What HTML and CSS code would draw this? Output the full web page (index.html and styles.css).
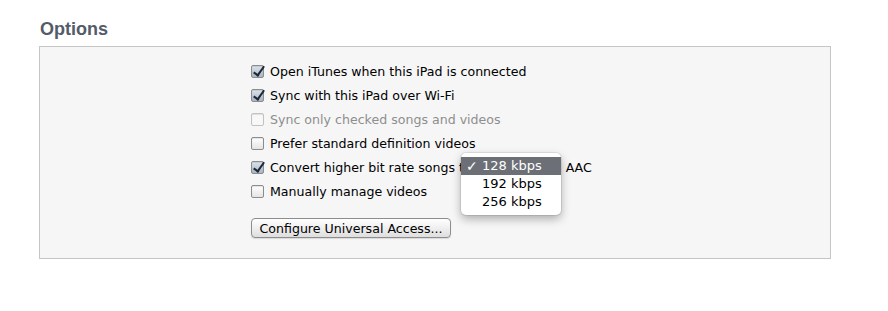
FILE: index.html
```html
<!DOCTYPE html>
<html lang="en">
<head>
  <meta charset="UTF-8" />
  <title>Options</title>
  <link rel="stylesheet" href="styles.css">
</head>
<body>
  <h1 class="title">Options</h1>

  <div class="panel">
    <div class="options">
      <div class="row">
        <span class="box checked"></span>
        <span class="label">Open iTunes when this iPad is connected</span>
      </div>
      <div class="row">
        <span class="box checked"></span>
        <span class="label">Sync with this iPad over Wi-Fi</span>
      </div>
      <div class="row disabled">
        <span class="box"></span>
        <span class="label">Sync only checked songs and videos</span>
      </div>
      <div class="row">
        <span class="box"></span>
        <span class="label">Prefer standard definition videos</span>
      </div>
      <div class="row convert">
        <span class="box checked"></span>
        <span class="label">Convert higher bit rate songs to</span>
        <span class="label aac">AAC</span>
        <ul class="menu">
          <li class="selected"><span class="tick">&#10003;</span>128 kbps</li>
          <li>192 kbps</li>
          <li>256 kbps</li>
        </ul>
      </div>
      <div class="row">
        <span class="box"></span>
        <span class="label">Manually manage videos</span>
      </div>

      <button class="button">Configure Universal Access...</button>
    </div>
  </div>
</body>
</html>
```

FILE: styles.css
```css
body {
  margin: 0;
  background: #ffffff;
  font-family: 'DejaVu Sans', 'Liberation Sans', sans-serif;
  color: #000000;
}

.title {
  margin: 0;
  padding: 18px 0 0 40px;
  font-family: 'Liberation Sans', Arial, sans-serif;
  font-size: 18px;
  font-weight: bold;
  line-height: 22px;
  color: #535b69;
}

.panel {
  margin: 6px 0 0 39px;
  width: 790px;
  height: 211px;
  background: #f6f6f6;
  border: 1px solid #c5c5c5;
}

.options {
  padding: 12px 0 0 211px;
  display: flex;
  flex-direction: column;
  align-items: flex-start;
}

.row {
  position: relative;
  display: flex;
  align-items: center;
  height: 24px;
  font-size: 12.6px;
}

.box {
  position: relative;
  width: 11px;
  height: 11px;
  margin-right: 6px;
  border: 1px solid #8c8c8c;
  border-radius: 2px;
  background: linear-gradient(#ffffff, #e4e4e4);
  box-shadow: inset 0 1px 1px rgba(0, 0, 0, 0.1);
}

.box.checked {
  background: linear-gradient(#dde4ec, #a7b5c4);
}

.box.checked::after {
  content: "";
  position: absolute;
  left: 4px;
  top: -2px;
  width: 4px;
  height: 10px;
  border: solid #1c2634;
  border-width: 0 2px 2px 0;
  transform: rotate(35deg);
}

.disabled .box {
  border-color: #c2c2c2;
  background: #f8f8f8;
}

.disabled .label {
  color: #8e8e8e;
}

.aac {
  margin-left: 94px;
}

.menu {
  position: absolute;
  left: 210px;
  top: -2px;
  width: 100px;
  margin: 0;
  padding: 4px 0 4px;
  list-style: none;
  background: #ffffff;
  border-radius: 5px;
  box-shadow: 0 4px 10px rgba(0, 0, 0, 0.3), 0 0 0 1px rgba(0, 0, 0, 0.08);
}

.menu li {
  height: 18px;
  line-height: 18px;
  padding-left: 21px;
  font-size: 13px;
}

.menu .selected {
  position: relative;
  background: #6c6f76;
  color: #ffffff;
}

.tick {
  position: absolute;
  left: 5px;
  top: 0;
  font-size: 14px;
  font-weight: bold;
}

.button {
  margin-top: 15px;
  width: 200px;
  height: 20px;
  padding: 0;
  font-family: 'DejaVu Sans', 'Liberation Sans', sans-serif;
  font-size: 12.6px;
  color: #000000;
  background: linear-gradient(#ffffff, #ececec 60%, #dedede);
  border: 1px solid #8d8d8d;
  border-radius: 4px;
  box-shadow: 0 1px 1px rgba(0, 0, 0, 0.12);
}
```
